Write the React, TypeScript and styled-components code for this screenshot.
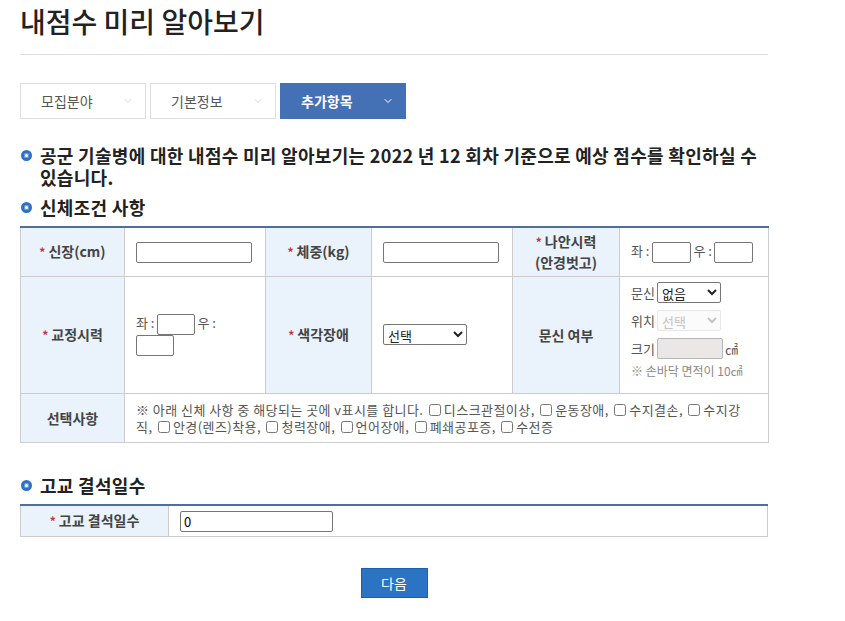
import styled, { createGlobalStyle } from "styled-components";
import { ChevronDown } from "lucide-react";

const GlobalStyle = createGlobalStyle`
  body {
    margin: 0;
    background: #fff;
    font-family: "Noto Sans CJK KR", "Noto Sans", sans-serif;
    color: #333;
  }
`;

const Page = styled.div`
  width: 748px;
  padding: 0 20px;
`;

const Title = styled.h1`
  margin: 0;
  padding-top: 1px;
  font-size: 28px;
  line-height: 40px;
  font-weight: 500;
  color: #222;
  letter-spacing: 0;
`;

const Divider = styled.hr`
  margin: 13px 0 0;
  border: 0;
  border-top: 1px solid #ddd;
`;

const TabBar = styled.div`
  display: flex;
  gap: 4px;
  margin-top: 28px;
`;

const Tab = styled.div<{ $active?: boolean }>`
  display: flex;
  align-items: center;
  justify-content: space-between;
  box-sizing: border-box;
  width: 126px;
  height: 36px;
  padding: 0 11px 0 20px;
  border: 1px solid ${(p) => (p.$active ? "#4470b6" : "#ddd")};
  background: ${(p) => (p.$active ? "#4470b6" : "#fff")};
  color: ${(p) => (p.$active ? "#fff" : "#555")};
  font-size: 14px;
  font-weight: ${(p) => (p.$active ? 700 : 400)};
`;

const Heading = styled.h2<{ $top: number }>`
  display: flex;
  align-items: flex-start;
  gap: 8px;
  margin: ${(p) => p.$top}px 0 8px;
  font-size: 18px;
  line-height: 22px;
  font-weight: 700;
  color: #222;
  letter-spacing: 0.3px;
`;

const Bullet = styled.span`
  flex: none;
  width: 5px;
  height: 5px;
  margin: 6px 0 0 1px;
  border: 3px solid #2f6fc6;
  border-radius: 50%;
  box-shadow: inset 0 0 0 1px #5a9be0;
`;

const Table = styled.table`
  width: 748px;
  border-collapse: collapse;
  table-layout: fixed;
  border-top: 2px solid #4f6e9e;
  font-size: 13px;
`;

const Row = styled.tr<{ $h: number }>`
  height: ${(p) => p.$h}px;
`;

const Label = styled.th`
  background: #eaf2fc;
  border: 1px solid #ccc;
  font-size: 14px;
  font-weight: 700;
  color: #444;
  text-align: center;
  line-height: 20px;
  padding: 0 4px;
`;

const Star = styled.span`
  color: #c8303a;
  font-size: 12px;
  margin-right: 3px;
`;

const Cell = styled.td<{ $pb?: number }>`
  border: 1px solid #ccc;
  padding: 0 12px ${(p) => p.$pb ?? 0}px 11px;
  color: #555;
  font-size: 13px;
  line-height: 20px;
  vertical-align: middle;
`;

const TextInput = styled.input<{ $w: number }>`
  box-sizing: border-box;
  width: ${(p) => p.$w}px;
  height: 21px;
  padding: 0 3px;
  border: 1px solid #767676;
  border-radius: 2px;
  font-family: inherit;
  font-size: 13px;
  vertical-align: middle;
  &:disabled {
    background: #e9e8e6;
    border-color: #b5b5b5;
  }
`;

const Select = styled.select<{ $w: number }>`
  box-sizing: border-box;
  width: ${(p) => p.$w}px;
  height: 21px;
  border: 1px solid #767676;
  border-radius: 2px;
  font-family: inherit;
  font-size: 13px;
  color: #222;
  background: #fff;
  vertical-align: middle;
  &:disabled {
    color: #aaa;
    border-color: #ddd;
    background: #fafafa;
  }
`;

const Pair = styled.span`
  color: #555;
  margin-right: 2px;
`;

const TattooList = styled.div`
  display: flex;
  flex-direction: column;
  gap: 7px;
  color: #555;
`;

const TattooLine = styled.div`
  display: flex;
  align-items: center;
  gap: 2px;
  height: 21px;
`;

const Note = styled.div`
  color: #888;
  font-size: 12px;
  line-height: 16px;
  margin-top: -3px;
`;

const CheckText = styled.div`
  line-height: 17px;
  color: #555;
  letter-spacing: 0.45px;
  word-break: break-all;
`;

const Check = styled.input`
  width: 12px;
  height: 12px;
  margin: 0 3px 0 2px;
  vertical-align: -1px;
`;

const Actions = styled.div`
  display: flex;
  justify-content: center;
  margin-top: 31px;
`;

const Button = styled.button`
  width: 67px;
  height: 30px;
  border: 1px solid #1f5ea8;
  background: #2b74c4;
  color: #fff;
  font-family: inherit;
  font-size: 14px;
`;

const options = [
  "디스크관절이상",
  "운동장애",
  "수지결손",
  "수지강직",
  "안경(렌즈)착용",
  "청력장애",
  "언어장애",
  "폐쇄공포증",
  "수전증",
];

export default function App() {
  return (
    <Page>
      <GlobalStyle />
      <Title>내점수 미리 알아보기</Title>
      <Divider />
      <TabBar>
        <Tab>
          모집분야 <ChevronDown size={12} strokeWidth={1.2} color="#bbb" />
        </Tab>
        <Tab>
          기본정보 <ChevronDown size={12} strokeWidth={1.2} color="#bbb" />
        </Tab>
        <Tab $active>
          추가항목 <ChevronDown size={12} strokeWidth={2} color="#fff" />
        </Tab>
      </TabBar>

      <Heading $top={25}>
        <Bullet />
        <span>
          공군 기술병에 대한 내점수 미리 알아보기는 2022 년 12 회차 기준으로 예상 점수를 확인하실 수
          있습니다.
        </span>
      </Heading>
      <Heading $top={0}>
        <Bullet />
        <span>신체조건 사항</span>
      </Heading>

      <Table>
        <colgroup>
          <col style={{ width: 104 }} />
          <col style={{ width: 141 }} />
          <col style={{ width: 106 }} />
          <col style={{ width: 141 }} />
          <col style={{ width: 107 }} />
          <col style={{ width: 149 }} />
        </colgroup>
        <tbody>
          <Row $h={49}>
            <Label>
              <Star>*</Star>신장(cm)
            </Label>
            <Cell>
              <TextInput $w={116} />
            </Cell>
            <Label>
              <Star>*</Star>체중(kg)
            </Label>
            <Cell>
              <TextInput $w={116} />
            </Cell>
            <Label>
              <Star>*</Star>나안시력
              <br />
              (안경벗고)
            </Label>
            <Cell>
              <Pair>좌 :</Pair>
              <TextInput $w={39} /> <Pair>우 :</Pair>
              <TextInput $w={39} />
            </Cell>
          </Row>
          <Row $h={117}>
            <Label>
              <Star>*</Star>교정시력
            </Label>
            <Cell>
              <Pair>좌 :</Pair>
              <TextInput $w={38} /> <Pair>우 :</Pair>
              <TextInput $w={38} />
            </Cell>
            <Label>
              <Star>*</Star>색각장애
            </Label>
            <Cell>
              <Select $w={84}>
                <option>선택</option>
              </Select>
            </Cell>
            <Label>문신 여부</Label>
            <Cell $pb={8}>
              <TattooList>
                <TattooLine>
                  문신
                  <Select $w={64}>
                    <option>없음</option>
                  </Select>
                </TattooLine>
                <TattooLine>
                  위치
                  <Select $w={64} disabled>
                    <option>선택</option>
                  </Select>
                </TattooLine>
                <TattooLine>
                  크기
                  <TextInput $w={66} disabled />
                  <span>㎠</span>
                </TattooLine>
                <Note>※ 손바닥 면적이 10㎠</Note>
              </TattooList>
            </Cell>
          </Row>
          <Row $h={49}>
            <Label>선택사항</Label>
            <Cell colSpan={5}>
              <CheckText>
                ※ 아래 신체 사항 중 해당되는 곳에 v표시를 합니다.
                {options.map((o, i) => (
                  <span key={o}>
                    {" "}
                    <Check type="checkbox" />
                    {o}
                    {i < options.length - 1 ? "," : ""}
                  </span>
                ))}
              </CheckText>
            </Cell>
          </Row>
        </tbody>
      </Table>

      <Heading $top={31}>
        <Bullet />
        <span>고교 결석일수</span>
      </Heading>
      <Table>
        <colgroup>
          <col style={{ width: 148 }} />
          <col />
        </colgroup>
        <tbody>
          <Row $h={32}>
            <Label>
              <Star>*</Star>고교 결석일수
            </Label>
            <Cell>
              <TextInput $w={153} defaultValue="0" />
            </Cell>
          </Row>
        </tbody>
      </Table>

      <Actions>
        <Button>다음</Button>
      </Actions>
    </Page>
  );
}
